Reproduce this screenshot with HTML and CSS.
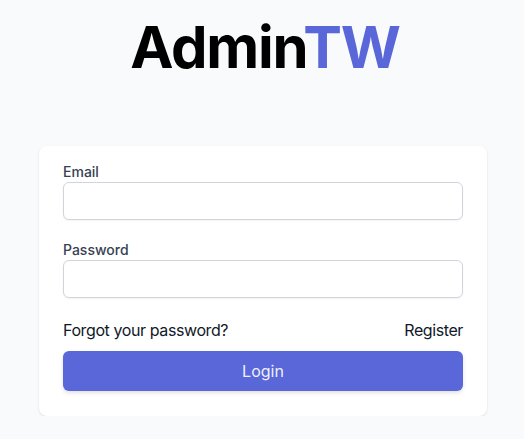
FILE: index.html
```html
<!DOCTYPE html>
<html>
<head>
<meta charset="utf-8">
<link rel="stylesheet" href="styles.css">
</head>
<body>
<div class="page">
  <h1 class="brand">Admin<span class="brand-accent">TW</span></h1>
  <form class="card">
    <label class="label" for="email">Email</label>
    <input class="input" id="email" type="email">
    <label class="label label-gap" for="password">Password</label>
    <input class="input" id="password" type="password">
    <div class="links">
      <a class="link" href="#">Forgot your password?</a>
      <a class="link" href="#">Register</a>
    </div>
    <button class="btn" type="button">Login</button>
  </form>
</div>
</body>
</html>
```

FILE: styles.css
```css
* { box-sizing: border-box; }
html, body { margin: 0; padding: 0; }
body {
  background: #f9fafb;
  font-family: Inter, "Noto Sans", sans-serif;
  color: #111827;
}
.page {
  display: flex;
  flex-direction: column;
  align-items: center;
  padding-top: 15px;
  padding-left: 2px;
}
.brand {
  margin: 0 0 0 4px;
  font-size: 58px;
  line-height: 64px;
  font-weight: 700;
  color: #000;
  letter-spacing: -1.2px;
}
.brand-accent { color: #5a67d8; }
.card {
  margin-top: 67px;
  width: 448px;
  background: #fff;
  border-radius: 8px;
  box-shadow: 0 1px 3px rgba(0,0,0,0.08), 0 1px 2px rgba(0,0,0,0.04);
  padding: 16px 24px 25px;
  display: flex;
  flex-direction: column;
}
.label {
  font-size: 14px;
  line-height: 20px;
  font-weight: 500;
  color: #374151;
}
.label-gap { margin-top: 20px; }
.input {
  height: 38px;
  width: 100%;
  border: 1px solid #d1d5db;
  border-radius: 6px;
  box-shadow: 0 1px 2px rgba(0,0,0,0.05);
  background: #fff;
  font: inherit;
  padding: 8px 12px;
}
.links {
  margin-top: 20px;
  display: flex;
  justify-content: space-between;
  font-size: 16px;
  line-height: 24px;
  letter-spacing: -0.4px;
}
.link { color: #111827; text-decoration: none; }
.btn {
  margin-top: 9px;
  height: 40px;
  border: none;
  border-radius: 6px;
  background: #5a67d8;
  color: rgba(255,255,255,0.92);
  font: inherit;
  font-size: 16px;
  box-shadow: 0 2px 4px rgba(0,0,0,0.12);
}
```
